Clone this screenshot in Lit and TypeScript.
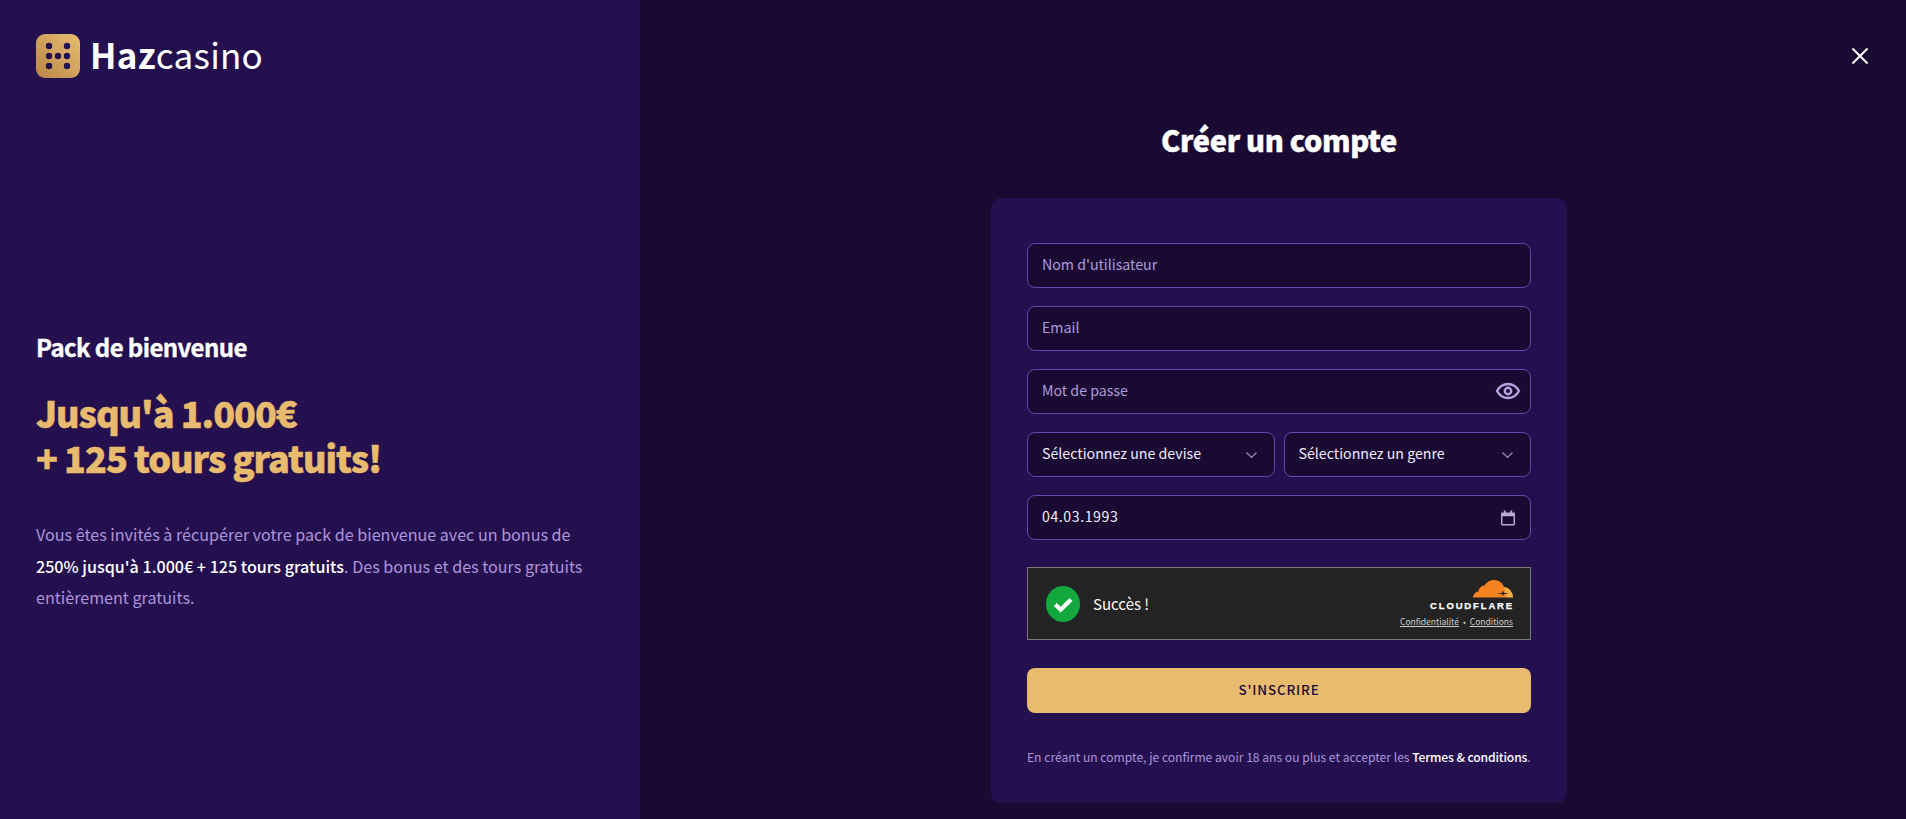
import { LitElement, html, svg, css } from "lit";
import { customElement } from "lit/decorators.js";

@customElement("app-root")
export class AppRoot extends LitElement {
  static styles = css`
    :host {
      display: block;
      width: 100%;
      height: 819px;
      overflow: hidden;
      font-family: "Noto Sans CJK JP", "Noto Sans", sans-serif;
      background: #1a0a33;
      color: #fff;
    }
    .page { display: flex; height: 819px; }
    .left {
      width: 640px;
      flex: none;
      box-sizing: border-box;
      background: #25104f;
      padding: 34px 36px 0;
      display: flex;
      flex-direction: column;
    }
    .brand { display: flex; align-items: center; gap: 10px; height: 44px; }
    .dice { width: 44px; height: 44px; display: block; }
    .brand-name { font-size: 35px; line-height: 44px; letter-spacing: 0.25px; font-weight: 400; margin-top: -4px; }
    .brand-name b { font-weight: 700; }
    .promo { margin-top: 249px; }
    .promo h3 { margin: 0; font-size: 24px; line-height: 40px; font-weight: 700; letter-spacing: -0.6px; -webkit-text-stroke: 0.35px #fff; }
    .promo h2 {
      margin: 23px 0 0;
      font-size: 36px;
      line-height: 45px;
      font-weight: 900;
      letter-spacing: -1.03px;
      -webkit-text-stroke: 0.5px #e8bb6e;
      color: #e8bb6e;
    }
    .promo p {
      margin: 39px 0 0;
      font-size: 16.13px;
      line-height: 31.5px;
      color: #ad94dc;
    }
    .promo p b { color: #fff; font-weight: 500; }
    .right {
      flex: 1;
      position: relative;
      display: flex;
      flex-direction: column;
      align-items: center;
      padding: 116px 0 0 12px;
      box-sizing: border-box;
    }
    .close {
      position: absolute;
      top: 47px;
      right: 37px;
      width: 18px;
      height: 18px;
      display: block;
    }
    h1 { margin: 0; font-size: 29px; line-height: 46px; font-weight: 900; letter-spacing: -0.35px; -webkit-text-stroke: 0.4px #fff; }
    .card {
      margin-top: 36px;
      width: 576px;
      height: 605px;
      box-sizing: border-box;
      padding: 45px 36px 0;
      background: #25104f;
      border-radius: 10px;
      display: flex;
      flex-direction: column;
    }
    .field {
      height: 45px;
      box-sizing: border-box;
      border: 1px solid #6049a8;
      border-radius: 8px;
      background: #1a0a33;
      padding: 0 14px 3px;
      display: flex;
      align-items: center;
      justify-content: space-between;
      font-size: 14.2px;
      color: #b09ada;
      margin-bottom: 18px;
    }
    .value { color: #f1ecfa; }
    .date { letter-spacing: 0.55px; }
    .row { display: grid; grid-template-columns: 1fr 1fr; gap: 9px; }
    .chev { width: 13px; height: 8px; display: block; margin: 3px 2px 0 0; }
    .eye { width: 26px; height: 26px; display: block; margin: 2px -5px 0 0; }
    .cal { width: 14px; height: 16px; display: block; margin: 3px 1px 0 0; }
    .turnstile {
      margin-top: 9px;
      height: 73px;
      box-sizing: border-box;
      border: 1px solid #797979;
      background: #232323;
      display: flex;
      align-items: center;
      padding: 0 17px 0 18px;
    }
    .tick { width: 34px; height: 36px; display: block; }
    .succes { margin-left: 13px; font-size: 15px; line-height: 24px; color: #fafafa; }
    .cf { margin-left: auto; display: flex; flex-direction: column; align-items: flex-end; }
    .cloud { width: 40px; height: 18px; display: block; }
    .cfname {
      font-family: "Liberation Sans", Arial, sans-serif;
      font-weight: 700;
      font-size: 9.5px;
      line-height: 10px;
      letter-spacing: 1.85px;
      margin-right: -1px;
      margin-top: 3px;
      -webkit-text-stroke: 0.25px #fff;
      color: #fff;
    }
    .links { font-size: 8.5px; line-height: 12px; color: #cfcfcf; margin-top: 4px; display: flex; gap: 4px; }
    .links span.u { text-decoration: underline; }
    .cta {
      margin-top: 28px;
      height: 45px;
      box-sizing: border-box;
      padding-bottom: 4px;
      border-radius: 8px;
      background: #e8bb6e;
      color: #1a0a33;
      font-size: 13.4px;
      font-weight: 500;
      letter-spacing: 0.85px;
      display: flex;
      align-items: center;
      justify-content: center;
    }
    .terms {
      margin-top: 34px;
      font-size: 12.1px;
      line-height: 20px;
      color: #ad94dc;
      white-space: nowrap;
    }
    .terms b { color: #fff; font-weight: 500; letter-spacing: -0.12px; }
  `;

  render() {
    const pips: [number, number][] = [
      [13, 12], [31, 12], [13, 22], [22, 22], [31, 22], [13, 32], [31, 32],
    ];
    return html`
      <div class="page">
        <aside class="left">
          <div class="brand">
            <svg class="dice" viewBox="0 0 44 44">
              <defs>
                <linearGradient id="g" x1="1" y1="0" x2="0" y2="1">
                  <stop offset="0" stop-color="#e8bf72" />
                  <stop offset="1" stop-color="#b98548" />
                </linearGradient>
              </defs>
              <rect width="44" height="44" rx="9" fill="url(#g)" />
              ${pips.map(([x, y]) => svg`<circle cx=${x} cy=${y} r="3.2" fill="#25104f"></circle>`)}
            </svg>
            <div class="brand-name"><b>Haz</b>casino</div>
          </div>
          <div class="promo">
            <h3>Pack de bienvenue</h3>
            <h2>Jusqu'à 1.000€<br />+ 125 tours gratuits!</h2>
            <p>
              Vous êtes invités à récupérer votre pack de bienvenue avec un bonus de<br />
              <b>250% jusqu'à 1.000€ + 125 tours gratuits</b>. Des bonus et des tours gratuits<br />
              entièrement gratuits.
            </p>
          </div>
        </aside>
        <main class="right">
          <svg class="close" viewBox="0 0 18 18" fill="none" stroke="#fff" stroke-width="2">
            <path d="M1.5 1.5l15 15M16.5 1.5l-15 15" />
          </svg>
          <h1>Créer un compte</h1>
          <div class="card">
            <div class="field">Nom d'utilisateur</div>
            <div class="field">Email</div>
            <div class="field">
              Mot de passe
              <svg class="eye" viewBox="0 0 26 26" fill="none" stroke="#b9a2e0" stroke-width="2.4">
                <path d="M2 13c2.6-4.6 6.3-7 11-7s8.400 2.400 11 7c-2.600 4.600-6.300 7-11 7s-8.400-2.400-11-7z" />
                <circle cx="13" cy="13" r="3.200" />
              </svg>
            </div>
            <div class="row">
              <div class="field">
                <span class="value">Sélectionnez une devise</span>
                <svg class="chev" viewBox="0 0 13 8" fill="none" stroke="#a08bc4" stroke-width="1.200"><path d="M1.500 1.500l5 5 5-5" /></svg>
              </div>
              <div class="field">
                <span class="value">Sélectionnez un genre</span>
                <svg class="chev" viewBox="0 0 13 8" fill="none" stroke="#a08bc4" stroke-width="1.200"><path d="M1.500 1.500l5 5 5-5" /></svg>
              </div>
            </div>
            <div class="field">
              <span class="value date">04.03.1993</span>
              <svg class="cal" viewBox="0 0 15 16"><path fill="#b9a9d6" d="M3 0h2v2h5V0h2v2h1.500A1.500 1.500 0 0 1 15 3.500v11a1.500 1.500 0 0 1-1.500 1.500h-12A1.500 1.500 0 0 1 0 14.500v-11A1.500 1.500 0 0 1 1.500 2H3zM1.500 6v8.500h12V6z" /></svg>
            </div>
            <div class="turnstile">
              <svg class="tick" viewBox="0 0 34 36">
                <ellipse cx="17" cy="18" rx="17" ry="18" fill="#12a83e" />
                <path d="M9.200 18.500l5.500 5.200 10.300-10.200" fill="none" stroke="#fff" stroke-width="4.200" />
              </svg>
              <span class="succes">Succès !</span>
              <div class="cf">
                <svg class="cloud" viewBox="0 0 40 18">
                  <path fill="#f6821f" d="M0 17.500C.5 14 2.500 11.500 5.500 11.500 6 8 8.500 5.500 11.500 5.500 13.500 2 17 0 21 0c5 0 9 3 10.500 8L33 17.500z" />
                  <path fill="#fbad41" d="M31 7c5 .5 9 5 9 10.500h-7z" />
                  <path fill="#232323" d="M30 10.500l.9 2.300 5.600.6-5.600.5-.9 2.400-.8-2.400-5.700-.5 5.700-.6z" />
                </svg>
                <div class="cfname">CLOUDFLARE</div>
                <div class="links"><span class="u">Confidentialité</span><span>•</span><span class="u">Conditions</span></div>
              </div>
            </div>
            <div class="cta">S'INSCRIRE</div>
            <div class="terms">En créant un compte, je confirme avoir 18 ans ou plus et accepter les <b>Termes &amp; conditions</b>.</div>
          </div>
        </main>
      </div>
    `;
  }
}
